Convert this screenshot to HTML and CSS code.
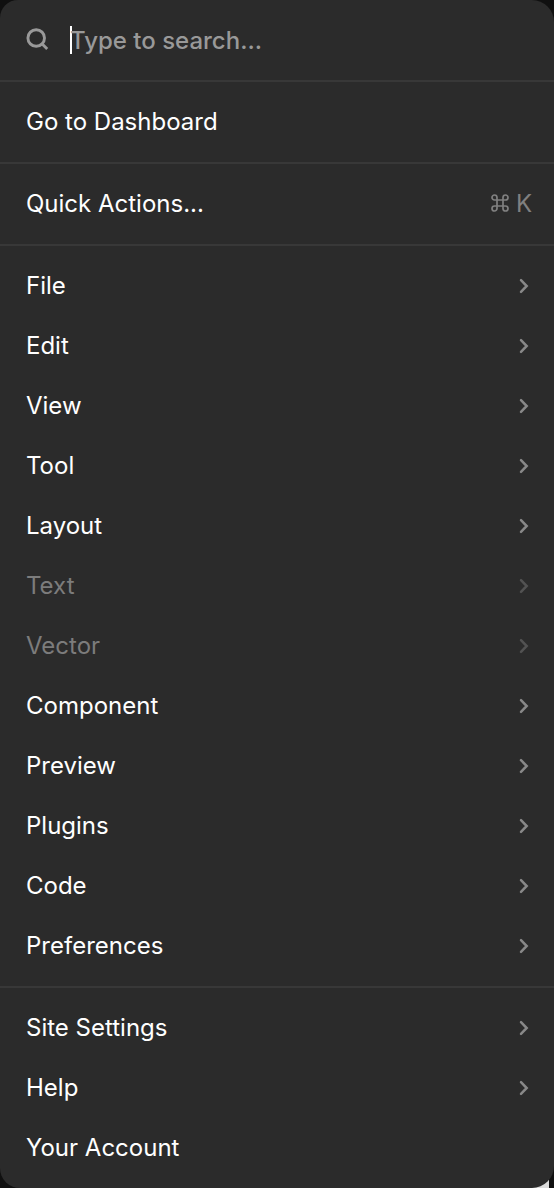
FILE: index.html
```html
<!DOCTYPE html>
<html lang="en">
<head>
<meta charset="utf-8">
<title>Menu</title>
<link rel="stylesheet" href="styles.css">
</head>
<body>
<svg class="defs" width="0" height="0" aria-hidden="true">
  <symbol id="chevron" viewBox="0 0 12 16"><path d="M3 2.2 L8.7 8 L3 13.8"/></symbol>
</svg>
<main class="menu">
  <div class="search">
    <svg class="search-icon" viewBox="0 0 24 24"><circle cx="10.2" cy="11" r="8.3"/><path d="M16.2 17 L21.2 22"/></svg>
    <span class="caret"></span><span class="placeholder">Type to search...</span>
  </div>
  <section class="group"><div class="item">Go to Dashboard</div></section>
  <section class="group"><div class="item">Quick Actions...
    <span class="shortcut"><svg class="command" viewBox="0 0 18 18"><path d="M6 6V3.5A2.5 2.5 0 1 0 3.5 6H14.5A2.5 2.5 0 1 0 12 3.5V14.5A2.5 2.5 0 1 0 14.5 12H3.5A2.5 2.5 0 1 0 6 14.5Z"/></svg><span>K</span></span></div></section>
  <section class="group">
    <div class="item">File<svg class="chevron"><use href="#chevron"/></svg></div>
    <div class="item">Edit<svg class="chevron"><use href="#chevron"/></svg></div>
    <div class="item">View<svg class="chevron"><use href="#chevron"/></svg></div>
    <div class="item">Tool<svg class="chevron"><use href="#chevron"/></svg></div>
    <div class="item">Layout<svg class="chevron"><use href="#chevron"/></svg></div>
    <div class="item disabled">Text<svg class="chevron"><use href="#chevron"/></svg></div>
    <div class="item disabled">Vector<svg class="chevron"><use href="#chevron"/></svg></div>
    <div class="item">Component<svg class="chevron"><use href="#chevron"/></svg></div>
    <div class="item">Preview<svg class="chevron"><use href="#chevron"/></svg></div>
    <div class="item">Plugins<svg class="chevron"><use href="#chevron"/></svg></div>
    <div class="item">Code<svg class="chevron"><use href="#chevron"/></svg></div>
    <div class="item">Preferences<svg class="chevron"><use href="#chevron"/></svg></div>
  </section>
  <section class="group">
    <div class="item">Site Settings<svg class="chevron"><use href="#chevron"/></svg></div>
    <div class="item">Help<svg class="chevron"><use href="#chevron"/></svg></div>
    <div class="item">Your Account</div>
  </section>
</main>
</body>
</html>
```

FILE: styles.css
```css
* { box-sizing: border-box; }
body {
  margin: 0;
  width: 554px;
  height: 1188px;
  overflow: hidden;
  /* light canvas visible behind the bottom-right corner */
  background: linear-gradient(#dcdcdc, #dcdcdc) 529px 1168px / 20px 20px no-repeat #101010;
  font-family: Inter, "Liberation Sans", sans-serif;
  font-size: 24px;
}
.defs { position: absolute; }
.menu {
  height: 1188px;
  background: #2b2b2b;
  border-radius: 18px 22px 22px 20px;
  color: #fff;
}
.search {
  display: flex;
  align-items: center;
  height: 80px;
  padding-left: 26px;
  color: #999;
  font-weight: 500;
}
.search-icon {
  width: 24px;
  height: 24px;
  margin: 0 20px 2px 0;
  fill: none;
  stroke: #999;
  stroke-width: 2.9;
}
.caret { width: 2px; height: 28px; background: #fff; }
.placeholder { margin-left: -2px; padding-top: 1px; }
.group { padding: 10px 0; border-top: 2px solid #383838; }
.item {
  display: flex;
  align-items: center;
  justify-content: space-between;
  height: 60px;
  padding: 0 24px 2px 26px;
}
.chevron {
  width: 12px;
  height: 16px;
  margin-top: 2px;
  fill: none;
  stroke: #888;
  stroke-width: 2.5;
  stroke-linecap: round;
}
.disabled { color: #7c7c7c; }
.disabled .chevron { stroke: #525252; }
.shortcut {
  display: flex;
  align-items: center;
  gap: 7px;
  margin-right: -2px;
  color: #808080;
}
.command { width: 18px; height: 18px; fill: none; stroke: #808080; stroke-width: 1.7; }
```
